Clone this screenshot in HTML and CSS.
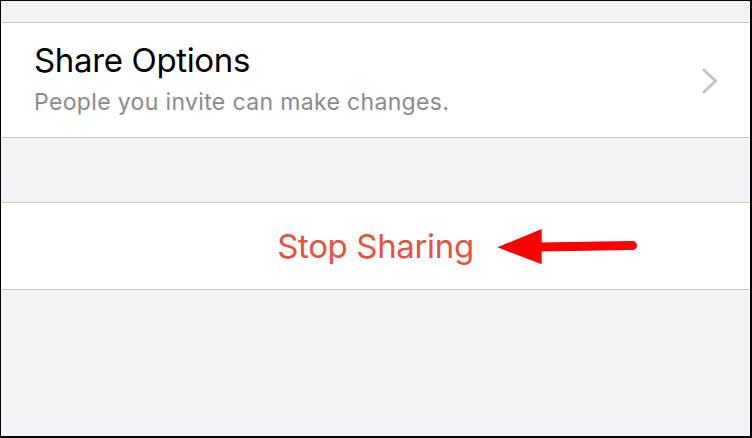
FILE: index.html
```html
<!DOCTYPE html>
<html lang="en">
<head>
  <meta charset="utf-8">
  <title>Share Options</title>
  <link rel="stylesheet" href="styles.css">
</head>
<body>
  <div class="frame">
    <div class="gap-top"></div>

    <div class="cell share-cell">
      <div class="cell-text">
        <div class="cell-title">Share Options</div>
        <div class="cell-subtitle">People you invite can make changes.</div>
      </div>
      <svg class="chevron" width="16" height="26" viewBox="0 0 16 26">
        <polyline points="2,2 13.5,13 2,24" fill="none" stroke="#c4c4c7" stroke-width="3" stroke-linecap="round" stroke-linejoin="round"/>
      </svg>
    </div>

    <div class="gap-mid"></div>

    <div class="cell stop-cell">
      <span class="stop-text">Stop Sharing</span>
      <!-- annotation arrow -->
      <svg class="arrow" width="160" height="50" viewBox="0 0 160 50">
        <line x1="50" y1="24" x2="142.5" y2="22.5" stroke="#ff0000" stroke-width="9" stroke-linecap="round"/>
        <polygon points="7.3,24.3 51.7,6 51.7,41.3" fill="#ff0000"/>
      </svg>
    </div>
  </div>
</body>
</html>
```

FILE: styles.css
```css
:root {
  --group-bg: #f2f2f7;
  --cell-bg: #ffffff;
  --separator: #c8c7cc;
  --label: #000000;
  --secondary: #8a8a8e;
  --destructive: #ea4f3f;
}

html, body {
  margin: 0;
  padding: 0;
}

body {
  font-family: Inter, "Liberation Sans", Arial, sans-serif;
}

.frame {
  box-sizing: border-box;
  width: 752px;
  height: 438px;
  background-color: var(--group-bg);
  border-style: solid;
  border-color: #000;
  border-width: 1px 2px 2px 1px;
}

.gap-top {
  height: 21px;
}

.gap-mid {
  height: 64px;
}

.cell {
  background-color: var(--cell-bg);
  border-top: 1px solid var(--separator);
  border-bottom: 1px solid var(--separator);
  display: flex;
  align-items: center;
}

.share-cell {
  height: 114px;
  padding: 0 34px 0 33px;
  justify-content: space-between;
}

.cell-text {
  display: flex;
  flex-direction: column;
  gap: 8px;
  padding-bottom: 4px;
}

.cell-title {
  font-size: 33px;
  line-height: 40px;
  letter-spacing: -0.35px;
  color: var(--label);
}

.cell-subtitle {
  font-size: 23px;
  line-height: 28px;
  letter-spacing: 0.35px;
  color: var(--secondary);
}

.chevron {
  display: block;
  margin-top: 2px;
  margin-right: -2px;
}

.stop-cell {
  position: relative;
  height: 86px;
  justify-content: center;
}

.stop-text {
  font-size: 33px;
  line-height: 40px;
  letter-spacing: -0.35px;
  color: var(--destructive);
}

.arrow {
  position: absolute;
  left: 489px;
  top: 20px;
}
```
